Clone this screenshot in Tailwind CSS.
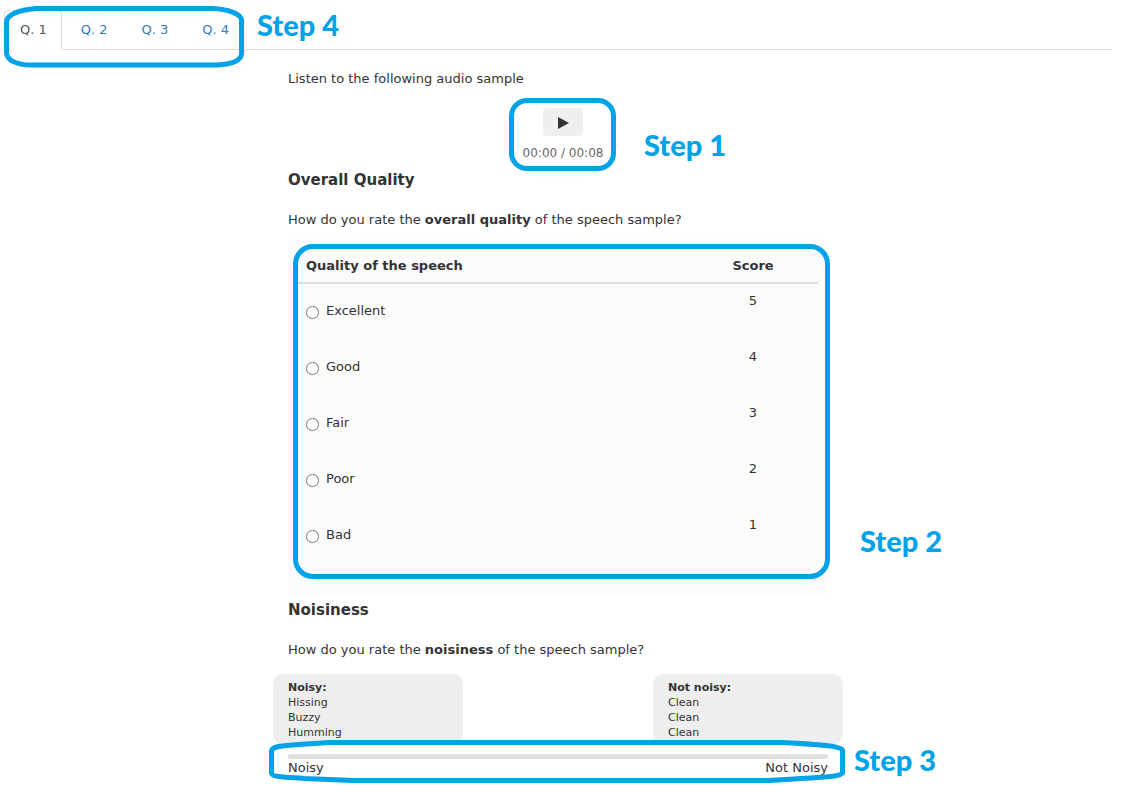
<!DOCTYPE html>
<html lang="en">
<head>
<meta charset="utf-8">
<meta name="viewport" content="width=device-width, initial-scale=1">
<title>Speech quality rating</title>
<script src="https://cdn.jsdelivr.net/npm/@tailwindcss/browser@4"></script>
</head>
<body class="min-h-screen bg-white font-['Verdana','DejaVu_Sans',sans-serif] text-[13px] leading-[18px] text-[#333]">
<div class="relative ml-1 mr-[10px] pt-[10px] pb-7">
  <nav class="flex border-b border-[#ddd]" aria-label="Questions">
    <a href="#q1" aria-current="page" class="-mb-px mr-[3px] rounded-t border border-[#ddd] border-b-white bg-white pr-[14px] pl-[15px] pt-[10px] pb-[9px] text-[#555]">Q. 1</a>
    <a href="#q2" class="mr-0.5 border border-transparent px-[15px] pt-[10px] pb-[9px] text-[#337ab7]">Q. 2</a>
    <a href="#q3" class="mr-0.5 border border-transparent px-[15px] pt-[10px] pb-[9px] text-[#337ab7]">Q. 3</a>
    <a href="#q4" class="mr-0.5 border border-transparent px-[15px] pt-[10px] pb-[9px] text-[#337ab7]">Q. 4</a>
  </nav>
  <svg class="pointer-events-none absolute left-0 top-[6px]" width="240" height="62" viewBox="0 0 240 62" fill="none" stroke="#00a2e8" stroke-width="5" aria-hidden="true"><path d="M32 2.5H208C224 3 237 8 237.500 14V48C237 54 230 58 213 59H27C12 59 3 54 2.500 47V17C2 9 14 4 32 2.500Z"/></svg>
  <p class="absolute left-[253px] top-[9px] font-['Lato'] text-[29px] leading-8 font-black text-[#00a2e8]">Step 4</p>

  <main id="q1" class="mx-auto max-w-[540px] pt-5">
    <p>Listen to the following audio sample</p>

    <section class="relative mt-5 flex flex-col items-center pl-[10px]" aria-label="Audio sample">
      <button type="button" aria-label="Play" class="flex h-7 w-10 items-center justify-center rounded bg-[#efefef] pt-0.5">
        <svg width="12" height="12" viewBox="0 0 12 12" fill="#333" aria-hidden="true"><path d="M1 0L12 6L1 12Z"/></svg>
      </button>
      <p class="mt-2 text-[12px] text-[#666]">00:00 / 00:08</p>
      <div class="pointer-events-none absolute -top-[10px] left-[221px] h-[73px] w-[107px] rounded-[18px] border-5 border-[#00a2e8]"></div>
      <p class="absolute left-[356px] top-[21px] font-['Lato'] text-[29px] leading-8 font-black text-[#00a2e8]">Step 1</p>
    </section>

    <h2 class="mt-2 text-[15px] leading-5 font-bold">Overall Quality</h2>
    <p class="mt-[21px]">How do you rate the <b>overall quality</b> of the speech sample?</p>

    <section class="relative mt-[10px] rounded bg-[#fbfbfb] p-[10px] pb-[30px]" aria-label="Overall quality">
      <table class="w-full border-separate border-spacing-0">
        <thead>
          <tr class="h-[35px]"><th class="border-b-2 border-[#ddd] px-2 text-left">Quality of the speech</th><th class="w-1/4 border-b-2 border-[#ddd] px-2">Score</th></tr>
        </thead>
        <tbody>
          <tr class="h-14 align-top"><td class="p-2"><label class="mt-[10px] flex items-start gap-[7px]"><input type="radio" name="quality" value="5" class="mt-[4px] size-[13px]">Excellent</label></td><td class="p-2 text-center">5</td></tr>
          <tr class="h-14 align-top"><td class="p-2"><label class="mt-[10px] flex items-start gap-[7px]"><input type="radio" name="quality" value="4" class="mt-[4px] size-[13px]">Good</label></td><td class="p-2 text-center">4</td></tr>
          <tr class="h-14 align-top"><td class="p-2"><label class="mt-[10px] flex items-start gap-[7px]"><input type="radio" name="quality" value="3" class="mt-[4px] size-[13px]">Fair</label></td><td class="p-2 text-center">3</td></tr>
          <tr class="h-14 align-top"><td class="p-2"><label class="mt-[10px] flex items-start gap-[7px]"><input type="radio" name="quality" value="2" class="mt-[4px] size-[13px]">Poor</label></td><td class="p-2 text-center">2</td></tr>
          <tr class="h-14 align-top"><td class="p-2"><label class="mt-[10px] flex items-start gap-[7px]"><input type="radio" name="quality" value="1" class="mt-[4px] size-[13px]">Bad</label></td><td class="p-2 text-center">1</td></tr>
        </tbody>
      </table>
      <div class="pointer-events-none absolute -right-[2px] bottom-[15px] left-[5px] top-[5px] rounded-[20px] border-5 border-[#00a2e8]"></div>
      <p class="absolute left-[572px] top-[286px] font-['Lato'] text-[29px] leading-8 font-black whitespace-nowrap text-[#00a2e8]">Step 2</p>
    </section>

    <h2 class="mt-[6px] text-[15px] leading-5 font-bold">Noisiness</h2>
    <p class="mt-[21px]">How do you rate the <b>noisiness</b> of the speech sample?</p>

    <section class="relative -mx-[15px] mt-[15px]" aria-label="Noisiness">
      <div class="flex justify-between text-[11px] leading-[15px]">
        <div class="w-[190px] rounded-[10px] bg-[#eee] px-[15px] pt-[6px] pb-1"><p class="font-bold">Noisy:</p><p>Hissing</p><p>Buzzy</p><p>Humming</p></div>
        <div class="w-[190px] rounded-[10px] bg-[#eee] px-[15px] pt-[6px] pb-1"><p class="font-bold">Not noisy:</p><p>Clean</p><p>Clean</p><p>Clean</p></div>
      </div>
      <div class="mt-[10px] px-[15px]">
        <input type="range" min="0" max="100" aria-label="Noisiness" class="block h-[5px] w-full appearance-none rounded-full bg-[#e0e0e0] [&::-webkit-slider-thumb]:invisible [&::-webkit-slider-thumb]:size-0 [&::-webkit-slider-thumb]:appearance-none">
        <div class="flex justify-between"><span>Noisy</span><span>Not Noisy</span></div>
      </div>
      <svg class="pointer-events-none absolute -left-1 top-[66px]" width="577" height="44" viewBox="0 0 577 44" fill="none" stroke="#00a2e8" stroke-width="5" aria-hidden="true"><path d="M60 2.500H515C538 4 571 5 573.500 10V33C571 37 554 37 525 39L500 40.500H85L35 38.500C15 37 2.500 37 2.500 33V11C3 6 13 6 30 4.500Z"/></svg>
      <p class="absolute left-[581px] top-[70px] font-['Lato'] text-[29px] leading-8 font-black whitespace-nowrap text-[#00a2e8]">Step 3</p>
    </section>
  </main>
</div>
</body>
</html>
